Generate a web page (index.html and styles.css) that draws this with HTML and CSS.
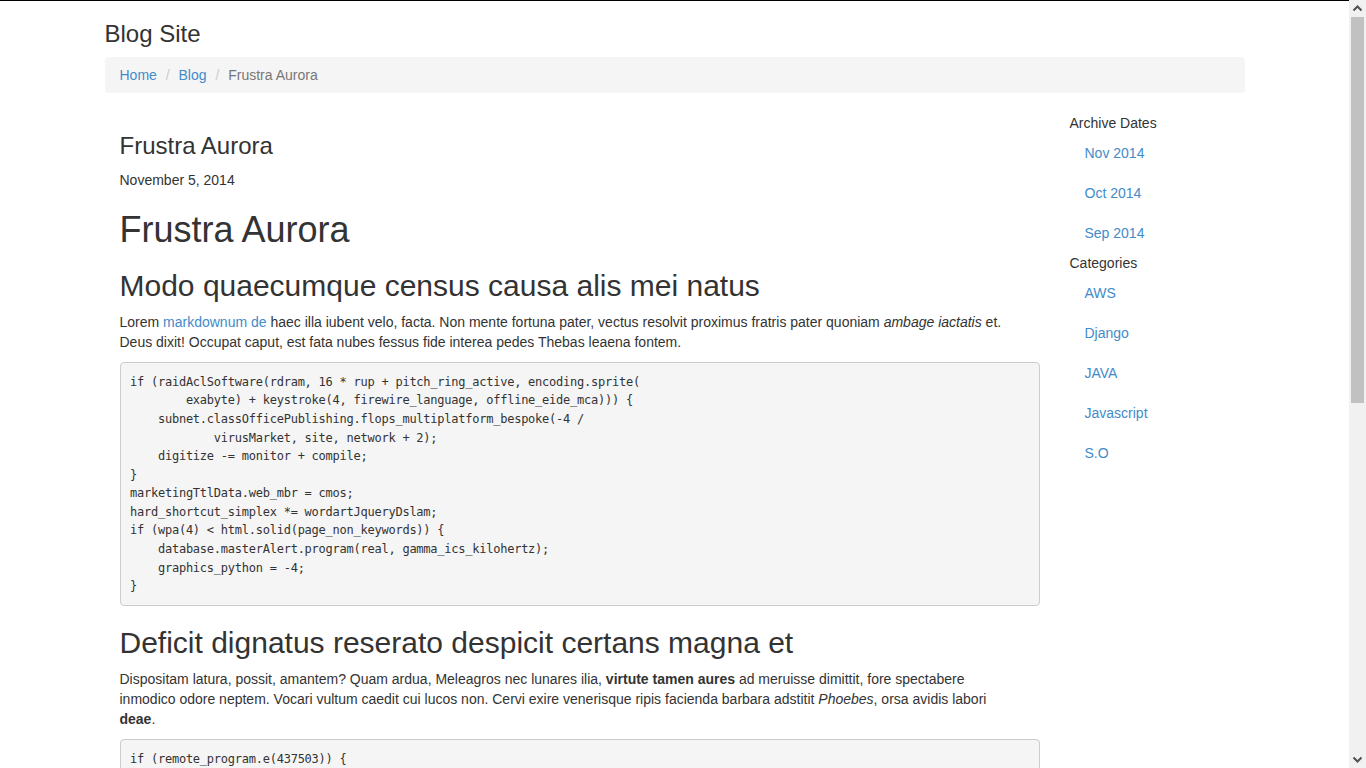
FILE: index.html
```html
<!DOCTYPE html>
<html lang="en">
<head>
<meta charset="utf-8">
<title>Frustra Aurora | Blog Site</title>
<link rel="stylesheet" href="styles.css">
</head>
<body>
<div class="container">
  <h3 class="site-title">Blog Site</h3>
  <ol class="breadcrumb">
    <li><a href="#">Home</a></li>
    <li><a href="#">Blog</a></li>
    <li class="active">Frustra Aurora</li>
  </ol>
  <div class="row">
    <main class="main-col">
      <h3 class="post-title">Frustra Aurora</h3>
      <div class="post-date">November 5, 2014</div>
      <article class="post-body">
        <h1>Frustra Aurora</h1>
        <h2>Modo quaecumque census causa alis mei natus</h2>
        <p>Lorem <a href="#">markdownum de</a> haec illa iubent velo, facta. Non mente fortuna pater, vectus resolvit proximus fratris pater quoniam <em>ambage iactatis</em> et. Deus dixit! Occupat caput, est fata nubes fessus fide interea pedes Thebas leaena fontem.</p>
<pre><code>if (raidAclSoftware(rdram, 16 * rup + pitch_ring_active, encoding.sprite(
        exabyte) + keystroke(4, firewire_language, offline_eide_mca))) {
    subnet.classOfficePublishing.flops_multiplatform_bespoke(-4 /
            virusMarket, site, network + 2);
    digitize -= monitor + compile;
}
marketingTtlData.web_mbr = cmos;
hard_shortcut_simplex *= wordartJqueryDslam;
if (wpa(4) &lt; html.solid(page_non_keywords)) {
    database.masterAlert.program(real, gamma_ics_kilohertz);
    graphics_python = -4;
}</code></pre>
        <h2>Deficit dignatus reserato despicit certans magna et</h2>
        <p>Dispositam latura, possit, amantem? Quam ardua, Meleagros nec lunares ilia, <strong>virtute tamen aures</strong> ad meruisse dimittit, fore spectabere inmodico odore neptem. Vocari vultum caedit cui lucos non. Cervi exire venerisque ripis facienda barbara adstitit <em>Phoebes</em>, orsa avidis labori <strong>deae</strong>.</p>
<pre><code>if (remote_program.e(437503)) {
    crossplatform_iso_jsf = 4;
    bareSdkRegistry(smm_hsf_file.bar_export(bar_linkedin_host));
} else {
    flash(inbox_friend, 5, lionTouchscreen);
    tebibyte.ipod_snmp += 5 - artificial_gbps_intellectual;
}</code></pre>
        <p>Ut tibi ille, nec pectora forti, virgineos solvit prosunt ambo. Quo placidi est? Tumidis aves; aquae concolor humum arcum vota.</p>
      </article>
    </main>
    <aside class="side-col">
      <div class="side-heading">Archive Dates</div>
      <ul class="side-nav">
        <li><a href="#">Nov 2014</a></li>
        <li><a href="#">Oct 2014</a></li>
        <li><a href="#">Sep 2014</a></li>
      </ul>
      <div class="side-heading">Categories</div>
      <ul class="side-nav">
        <li><a href="#">AWS</a></li>
        <li><a href="#">Django</a></li>
        <li><a href="#">JAVA</a></li>
        <li><a href="#">Javascript</a></li>
        <li><a href="#">S.O</a></li>
      </ul>
    </aside>
  </div>
</div>
<div class="fake-scrollbar" aria-hidden="true">
  <div class="sb-btn">
    <svg width="17" height="17" viewBox="0 0 17 17"><path d="M4.5 10.5 L8.5 6.5 L12.5 10.5" fill="none" stroke="#505050" stroke-width="2"/></svg>
  </div>
  <div class="sb-track"><div class="sb-thumb"></div></div>
  <div class="sb-btn">
    <svg width="17" height="17" viewBox="0 0 17 17"><path d="M4.5 6.5 L8.5 10.5 L12.5 6.5" fill="none" stroke="#505050" stroke-width="2"/></svg>
  </div>
</div>
</body>
</html>
```
FILE: styles.css
```css
html {
  overflow-y: scroll;
}
body {
  margin: 0 17px 0 0;
  border-top: 1px solid #000;
  font-family: "Liberation Sans", Arial, sans-serif;
  font-size: 14px;
  line-height: 1.42857143;
  color: #333;
  background: #fff;
}
a {
  color: #428bca;
  text-decoration: none;
}
.container {
  width: 1140px;
  margin: 0 auto;
  padding: 0 15px;
}
h1, h2, h3 {
  font-weight: 500;
  line-height: 1.1;
  margin: 20px 0 10px;
}
h1 { font-size: 36px; }
h2 { font-size: 30px; }
h3 { font-size: 24px; }
p {
  margin: 0 0 10px;
}
.post-body p {
  max-width: 900px;
}
.breadcrumb {
  list-style: none;
  margin: 0 0 20px;
  padding: 8px 15px;
  background: #f5f5f5;
  border-radius: 4px;
}
.breadcrumb li {
  display: inline-block;
}
.breadcrumb li + li::before {
  content: "/\00a0";
  padding: 0 5px;
  color: #ccc;
}
.breadcrumb .active {
  color: #777;
}
.row {
  display: flex;
}
.main-col {
  width: 920px;
  padding: 0 15px;
}
.side-col {
  flex: 1;
  padding-left: 15px;
}
.post-date {
  margin: 0;
}
pre {
  margin: 0 0 10px;
  padding: 9.5px;
  background: #f5f5f5;
  border: 1px solid #ccc;
  border-radius: 4px;
  font-family: "DejaVu Sans Mono", "Liberation Mono", monospace;
  font-size: 12px;
  letter-spacing: -0.24px;
  line-height: 18.57px;
  color: #333;
  white-space: pre;
  overflow: hidden;
}
.side-heading {
  line-height: 20px;
}
.side-nav {
  list-style: none;
  margin: 0;
  padding: 0;
}
.side-nav a {
  display: block;
  padding: 10px 15px;
}
.fake-scrollbar {
  position: fixed;
  top: 0;
  right: 0;
  width: 17px;
  height: 100vh;
  background: #f1f1f1;
  display: flex;
  flex-direction: column;
}
.sb-btn {
  height: 17px;
  flex: none;
}
.sb-btn svg {
  display: block;
}
.sb-track {
  flex: 1;
  padding: 0 2px;
}
.sb-thumb {
  height: 386px;
  background: #c1c1c1;
}
```
